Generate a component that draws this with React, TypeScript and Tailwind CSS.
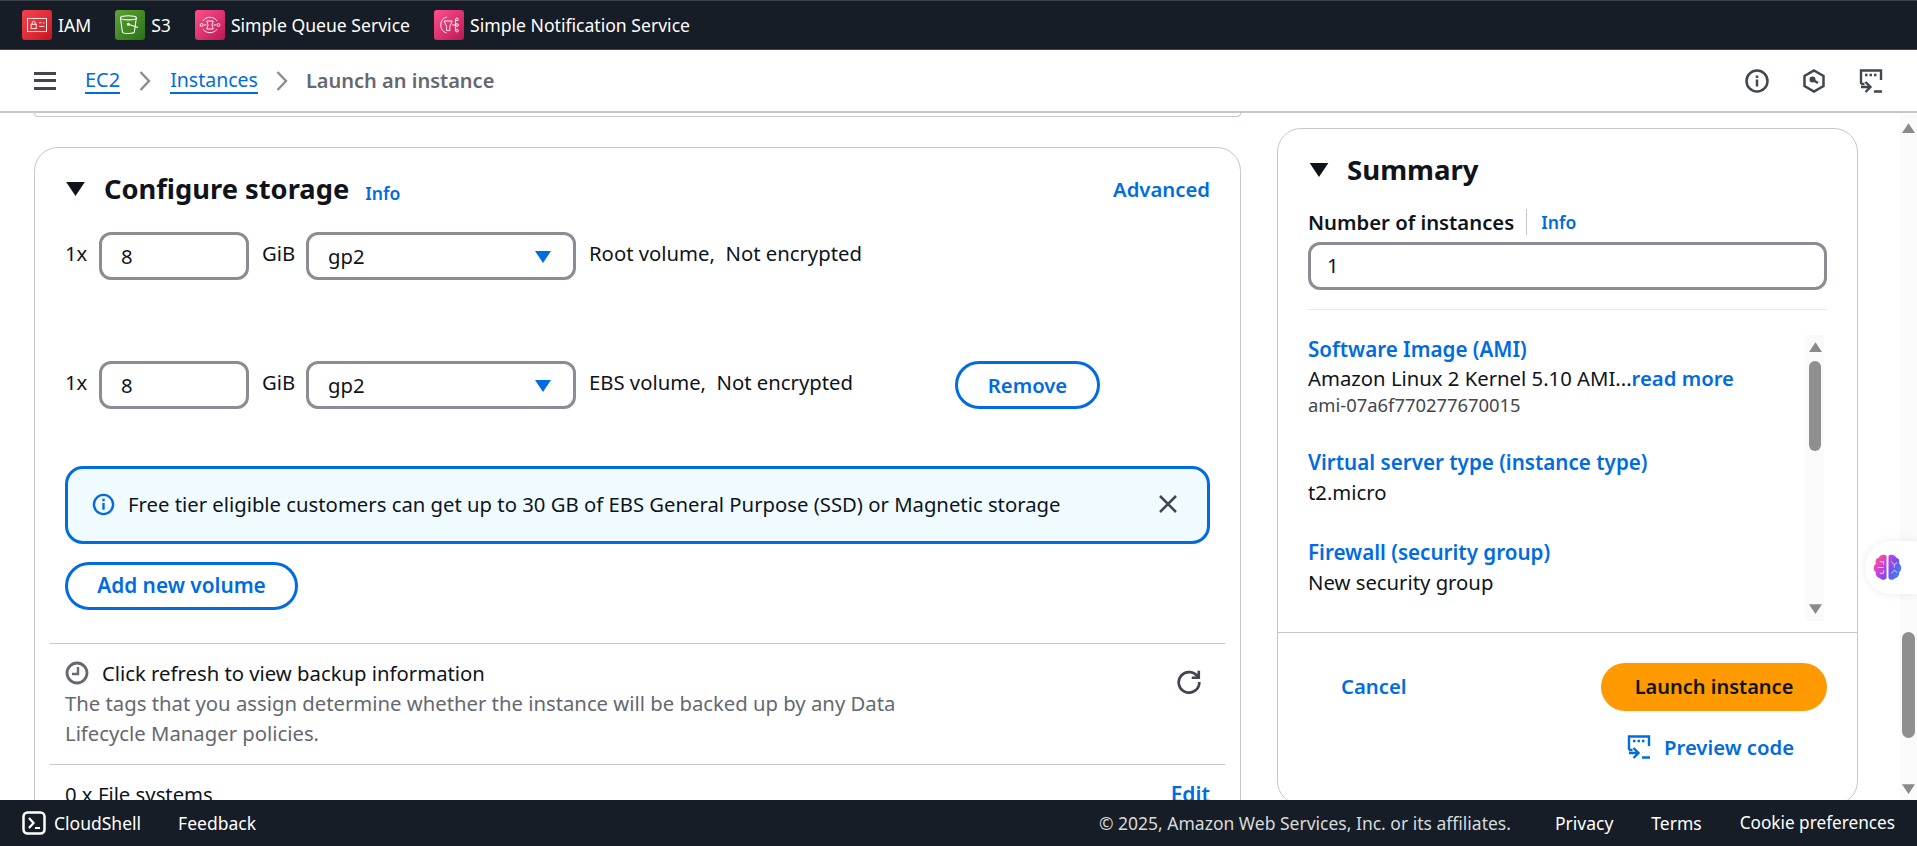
import { useState } from 'react'

const services = [
  { name: 'IAM', color: 'from-[#f5434f] to-[#c7131f]', icon: 'iam' },
  { name: 'S3', color: 'from-[#60a337] to-[#277116]', icon: 's3' },
  { name: 'Simple Queue Service', color: 'from-[#ff4f8b] to-[#bc1356]', icon: 'sqs' },
  { name: 'Simple Notification Service', color: 'from-[#ff4f8b] to-[#bc1356]', icon: 'sns' },
]

function ServiceIcon({ icon }: { icon: string }) {
  if (icon === 'iam') {
    return (
      <svg viewBox="0 0 30 30" className="w-[22px] h-[22px]" fill="none" stroke="white" strokeWidth="1.2">
        <rect x="2" y="6" width="26" height="18" />
        <rect x="7" y="14" width="7" height="6" />
        <path d="M8.5 14v-2a2 2 0 0 1 4 0v2M18 12h3M23 12h2M18 17h7" />
      </svg>
    )
  }
  if (icon === 's3') {
    return (
      <svg viewBox="0 0 30 30" className="w-[24px] h-[24px]" fill="none" stroke="white" strokeWidth="1.3">
        <ellipse cx="13" cy="6" rx="10" ry="2.6" />
        <path d="M3 6l2.6 18c.3 2 14.500 2 14.800 0L23 6M13 14l12 4" />
        <circle cx="13" cy="14" r="1.300" />
      </svg>
    )
  }
  if (icon === 'sqs') {
    return (
      <svg viewBox="0 0 30 30" className="w-[24px] h-[24px]" fill="none" stroke="white" strokeWidth="1.1">
        <path d="M6 10a11 11 0 0 1 18 0M6 20a11 11 0 0 0 18 0" />
        <circle cx="4.500" cy="15" r="1.800" />
        <circle cx="25.500" cy="15" r="1.800" />
        <path d="M11 10h8l-1.500 5 1.500 5h-8l1.500-5zM7.500 15h3M19.500 15h3" />
      </svg>
    )
  }
  return (
    <svg viewBox="0 0 30 30" className="w-[24px] h-[24px]" fill="none" stroke="white" strokeWidth="1.1">
      <path d="M12 5a10.500 10.500 0 0 0 0 20" />
      <path d="M9 10h10l-3 7v5h-4v-5z" />
      <path d="M19 15h4M23 8v14M23 8h1M23 22h1" />
      <circle cx="25" cy="8" r="1.700" />
      <circle cx="25" cy="15" r="1.700" />
      <circle cx="25" cy="22" r="1.700" />
    </svg>
  )
}

function Caret({ className }: { className: string }) {
  return (
    <svg viewBox="0 0 16 12" className={className} fill="currentColor">
      <path d="M0 0h16L8 12z" />
    </svg>
  )
}

function Chevron() {
  return (
    <svg viewBox="0 0 12 20" className="w-[12px] h-[20px] text-[#8c8c94]" fill="none" stroke="currentColor" strokeWidth="2.400">
      <path d="M1.500 1l8.500 9-8.500 9" />
    </svg>
  )
}

function PreviewIcon({ className }: { className: string }) {
  return (
    <svg viewBox="0 0 24 24" className={className} fill="none" stroke="currentColor" strokeWidth="2.400">
      <path d="M2 15V1.500h20V11M2 15h3.500" />
      <path d="M6 6h2.500M10.500 6H13M15 6h2.500" strokeWidth="2.600" />
      <path d="M6.500 13l5 5-5 5M2 18h9M15 22.500h8" />
    </svg>
  )
}

function VolumeRow({ label, children }: { label: string; children?: React.ReactNode }) {
  return (
    <div className="flex items-start h-[48px]">
      <span className="w-[34px] pt-[6px]">1x</span>
      <div className="w-[150px] h-[48px] border-[3px] border-[#8c8c94] rounded-[12px] flex items-center pl-[19px] pt-[1px]">8</div>
      <span className="w-[57px] pl-[13px] pt-[6px]">GiB</span>
      <div className="w-[270px] h-[48px] border-[3px] border-[#8c8c94] rounded-[12px] flex items-center justify-between pl-[19px] pr-[22px] pt-[1px]">
        <span>gp2</span>
        <Caret className="w-[16px] h-[12px] text-[#006ce0]" />
      </div>
      <span className="w-[379px] pl-[13px] pt-[6px] whitespace-pre">{label}</span>
      {children}
    </div>
  )
}

function SummaryItem({ title, value, className }: { title: string; value: React.ReactNode; className: string }) {
  return (
    <div className={className}>
      <p className="text-[#006ce0] font-semibold leading-[28px] text-[20.6px]">{title}</p>
      <div className="leading-[32px]">{value}</div>
    </div>
  )
}

export default function App() {
  const [alertOpen] = useState(true)

  return (
    <div className="h-screen overflow-hidden flex flex-col bg-white text-[#0f141a] text-[20.3px] font-['Noto_Sans',sans-serif]">
      {/* top bar */}
      <div className="h-[50px] shrink-0 bg-[#161d26] border-t border-t-[#3b4048] border-b border-b-[#414750] flex items-center pl-[22px] text-white text-[17.6px]">
        {services.map(s => (
          <div key={s.name} className="flex items-center gap-[6px] mr-[24px]">
            <div className={`w-[30px] h-[30px] rounded-[3px] bg-gradient-to-br ${s.color} flex items-center justify-center`}>
              <ServiceIcon icon={s.icon} />
            </div>
            <span>{s.name}</span>
          </div>
        ))}
      </div>

      {/* breadcrumbs */}
      <div className="h-[63px] shrink-0 border-b-2 border-[#c6c6cd] flex items-center pl-[34px] pr-[34px] text-[20px]">
        <div className="w-[22px] h-[18px] flex flex-col justify-between mr-[29px]">
          <div className="h-[3px] bg-[#424650]" />
          <div className="h-[3px] bg-[#424650]" />
          <div className="h-[3px] bg-[#424650]" />
        </div>
        <a className="text-[#006ce0] border-b-2 border-[#006ce0] leading-[25px]">EC2</a>
        <div className="mx-[19px]"><Chevron /></div>
        <a className="text-[#006ce0] border-b-2 border-[#006ce0] leading-[25px] text-[19.5px]">Instances</a>
        <div className="mx-[18px]"><Chevron /></div>
        <span className="text-[#656871] font-semibold">Launch an instance</span>
        <div className="ml-auto flex items-center gap-[33px] text-[#424650]">
          <svg viewBox="0 0 24 24" className="w-[24px] h-[24px]" fill="none" stroke="currentColor" strokeWidth="2.500">
            <circle cx="12" cy="12" r="10.500" />
            <path d="M12 10.500v7M12 6.500v2.500" />
          </svg>
          <svg viewBox="0 0 24 24" className="w-[24px] h-[24px]" fill="none" stroke="currentColor" strokeWidth="2.500">
            <path d="M12 1.500l9.500 5.500v10L12 22.500 2.500 17V7z" />
            <path d="M11 11l5 3" />
            <circle cx="10.500" cy="10.500" r="1.800" fill="currentColor" />
          </svg>
          <PreviewIcon className="w-[24px] h-[24px]" />
        </div>
      </div>

      {/* page */}
      <div className="relative flex-1 min-h-0 flex overflow-hidden">
        <div className="flex-1 flex items-start pl-[34px] min-w-0">
          <div className="w-[1207px] shrink-0">
            <div className="h-[4px] border border-t-0 border-[#c6c6cd] rounded-b-[24px]" />
            <div className="mt-[30px] border border-[#c6c6cd] rounded-t-[24px] h-[800px] px-[30px]">
              <div className="flex items-center h-[36px] mt-[23px]">
                <Caret className="w-[21px] h-[14px] text-[#0f141a]" />
                <h2 className="ml-[18px] text-[27.3px] font-bold leading-[36px]">Configure storage</h2>
                <a className="ml-[16px] mt-[8px] text-[17.6px] font-semibold text-[#006ce0]">Info</a>
                <a className="ml-auto text-[#006ce0] font-semibold">Advanced</a>
              </div>
              <div className="mt-[25px] flex flex-col gap-[81px]">
                <VolumeRow label="Root volume,  Not encrypted" />
                <VolumeRow label="EBS volume,  Not encrypted">
                  <button className="w-[145px] h-[48px] border-[3px] border-[#006ce0] rounded-full text-[#006ce0] font-semibold">Remove</button>
                </VolumeRow>
              </div>
              {alertOpen && (
                <div className="mt-[57px] h-[78px] border-[3px] border-[#006ce0] rounded-[18px] bg-[#f0fbff] flex items-center pl-[24px] pr-[29px] pb-[2px]">
                  <svg viewBox="0 0 24 24" className="w-[23px] h-[23px] text-[#006ce0] shrink-0" fill="none" stroke="currentColor" strokeWidth="2.500">
                    <circle cx="12" cy="12" r="10" />
                    <path d="M12 10.500v7M12 6v2.500" />
                  </svg>
                  <span className="ml-[13px]">Free tier eligible customers can get up to 30 GB of EBS General Purpose (SSD) or Magnetic storage</span>
                  <svg viewBox="0 0 20 20" className="ml-auto w-[20px] h-[20px] text-[#424650]" fill="none" stroke="currentColor" strokeWidth="2.500">
                    <path d="M2 2l16 16M18 2L2 18" />
                  </svg>
                </div>
              )}
              <button className="mt-[18px] block w-[233px] h-[48px] border-[3px] border-[#006ce0] rounded-full text-[#006ce0] font-semibold text-[20.8px]">Add new volume</button>
              <div className="mt-[33px] -mx-[15px] border-t border-[#c6c6cd]" />
              <div className="relative h-[120px] pt-[14px]">
                <div className="flex items-center h-[30px]">
                  <svg viewBox="0 0 24 24" className="w-[24px] h-[24px] text-[#656871]" fill="none" stroke="currentColor" strokeWidth="2.800">
                    <circle cx="12" cy="12" r="10" />
                    <path d="M13 6v7H7" strokeWidth="2.400" />
                  </svg>
                  <span className="ml-[13px]">Click refresh to view backup information</span>
                </div>
                <p className="w-[860px] text-[#656871] leading-[30px]">The tags that you assign determine whether the instance will be backed up by any Data Lifecycle Manager policies.</p>
                <svg viewBox="0 0 24 24" className="absolute right-[8px] top-[24px] w-[26px] h-[26px] text-[#424650]" fill="none" stroke="currentColor" strokeWidth="2.500">
                  <path d="M20.500 9A9.500 9.500 0 1 0 21.500 13M21 2.500V9h-6.500" />
                </svg>
              </div>
              <div className="-mx-[15px] border-t border-[#c6c6cd]" />
              <div className="flex justify-between mt-[16px] leading-[26px]">
                <span>0 x File systems</span>
                <a className="text-[#006ce0] font-semibold text-[21px]">Edit</a>
              </div>
            </div>
          </div>

          {/* summary */}
          <div className="ml-[36px] mt-[15px] w-[581px] h-[677px] shrink-0 border border-[#c6c6cd] rounded-[24px] flex flex-col">
            <div className="px-[30px]">
              <div className="flex items-center h-[36px] mt-[23px]">
                <Caret className="w-[20px] h-[14px] text-[#0f141a] ml-[1px]" />
                <h2 className="ml-[18px] text-[27.6px] font-bold">Summary</h2>
              </div>
              <div className="flex items-center mt-[20px] h-[28px]">
                <span className="font-semibold">Number of instances</span>
                <span className="ml-[12px] w-px h-[26px] bg-[#c6c6cd]" />
                <a className="ml-[14px] text-[17.6px] font-semibold text-[#006ce0]">Info</a>
              </div>
              <div className="mt-[6px] h-[48px] border-[3px] border-[#8c8c94] rounded-[12px] flex items-center pl-[16px] pb-[2px]">1</div>
              <div className="mt-[19px] border-t border-[#e8e8ec]" />
            </div>
            <div className="ml-[30px] mr-[33px] mt-[25px] h-[286px] flex relative">
              <div className="flex-1">
                <SummaryItem title="Software Image (AMI)" className="" value={
                  <>
                    <span className="block leading-[30px]">Amazon Linux 2 Kernel 5.10 AMI...<a className="text-[#006ce0] font-semibold">read more</a></span>
                    <span className="block text-[18.400px] text-[#424650] leading-[24px]">ami-07a6f770277670015</span>
                  </>
                } />
                <SummaryItem title="Virtual server type (instance type)" className="mt-[31px]" value="t2.micro" />
                <SummaryItem title="Firewall (security group)" className="mt-[30px]" value="New security group" />
              </div>
              <div className="w-[18px] h-[286px] bg-[#fafafa] flex flex-col items-center">
                <Caret className="w-[13px] h-[10px] text-[#8a8a8a] rotate-180 mt-[7px]" />
                <div className="w-[12px] h-[90px] mt-[9px] rounded-full bg-[#8f8f8f]" />
                <Caret className="w-[13px] h-[10px] text-[#8a8a8a] mt-auto mb-[7px]" />
              </div>
            </div>
            <div className="mt-[11px] border-t border-[#c6c6cd]" />
            <div className="px-[30px] flex items-start justify-between mt-[30px]">
              <a className="ml-[33px] mt-[8px] text-[#006ce0] font-semibold">Cancel</a>
              <button className="w-[226px] h-[48px] bg-[#ff9900] rounded-full font-semibold text-[20px]">Launch instance</button>
            </div>
            <a className="self-end mr-[63px] mt-[21px] flex items-center gap-[13px] text-[#006ce0] font-semibold">
              <PreviewIcon className="w-[24px] h-[24px]" />
              Preview code
            </a>
          </div>
        </div>

        {/* page scrollbar */}
        <div className="w-[17px] shrink-0 bg-[#fafafa] flex flex-col items-center">
          <Caret className="w-[13px] h-[10px] text-[#8a8a8a] rotate-180 mt-[10px]" />
          <div className="w-[13px] h-[106px] mt-[499px] rounded-full bg-[#8f8f8f]" />
          <Caret className="w-[13px] h-[10px] text-[#8a8a8a] mt-auto mb-[6px]" />
        </div>

        {/* floating brain button */}
        <div className="absolute right-0 top-[428px] w-[52px] h-[53px] bg-white rounded-l-[26px] shadow-[0_0_8px_rgba(0,0,0,0.08)] flex items-center pl-[8px]">
          <svg viewBox="0 0 30 28" className="w-[29px] h-[27px]">
            <defs>
              <linearGradient id="brain" x1="0" y1="0" x2="1" y2="0.600">
                <stop offset="0" stopColor="#ff6a3d" />
                <stop offset="0.350" stopColor="#e03fd0" />
                <stop offset="0.700" stopColor="#7a4df0" />
                <stop offset="1" stopColor="#3f7df5" />
              </linearGradient>
            </defs>
            <path fill="url(#brain)" d="M14 2c-1-2-7-2-8 2-3 0-4 4-3 6-3 2-3 7 0 9-1 3 2 6 4 6 2 3 7 2 7-1zM16 2c1-2 7-2 8 2 3 0 4 4 3 6 3 2 3 7 0 9 1 3-2 6-4 6-2 3-7 2-7-1z" />
            <path fill="none" stroke="white" strokeWidth="1" opacity="0.800" d="M5 14h6M7 8h4v3M7 20h4v-3M19 8l3 3v3M25 9l-3 2M19 20l3-3M25 19l-3-2" />
          </svg>
        </div>
      </div>

      {/* footer */}
      <div className="h-[46px] shrink-0 bg-[#161d26] text-white text-[17.5px] flex items-center pl-[22px] pr-[22px]">
        <svg viewBox="0 0 24 24" className="w-[24px] h-[24px]" fill="none" stroke="white">
          <rect x="1.500" y="1.500" width="21" height="21" rx="4" strokeWidth="2.500" />
          <path d="M7 7l4.500 5L7 17M13 17h5" strokeWidth="2.200" />
        </svg>
        <span className="ml-[8px]">CloudShell</span>
        <span className="ml-[37px]">Feedback</span>
        <span className="ml-auto text-[#d5dbdb]">© 2025, Amazon Web Services, Inc. or its affiliates.</span>
        <span className="ml-[44px]">Privacy</span>
        <span className="ml-[38px]">Terms</span>
        <span className="ml-[38px] text-[17.2px]">Cookie preferences</span>
      </div>
    </div>
  )
}
